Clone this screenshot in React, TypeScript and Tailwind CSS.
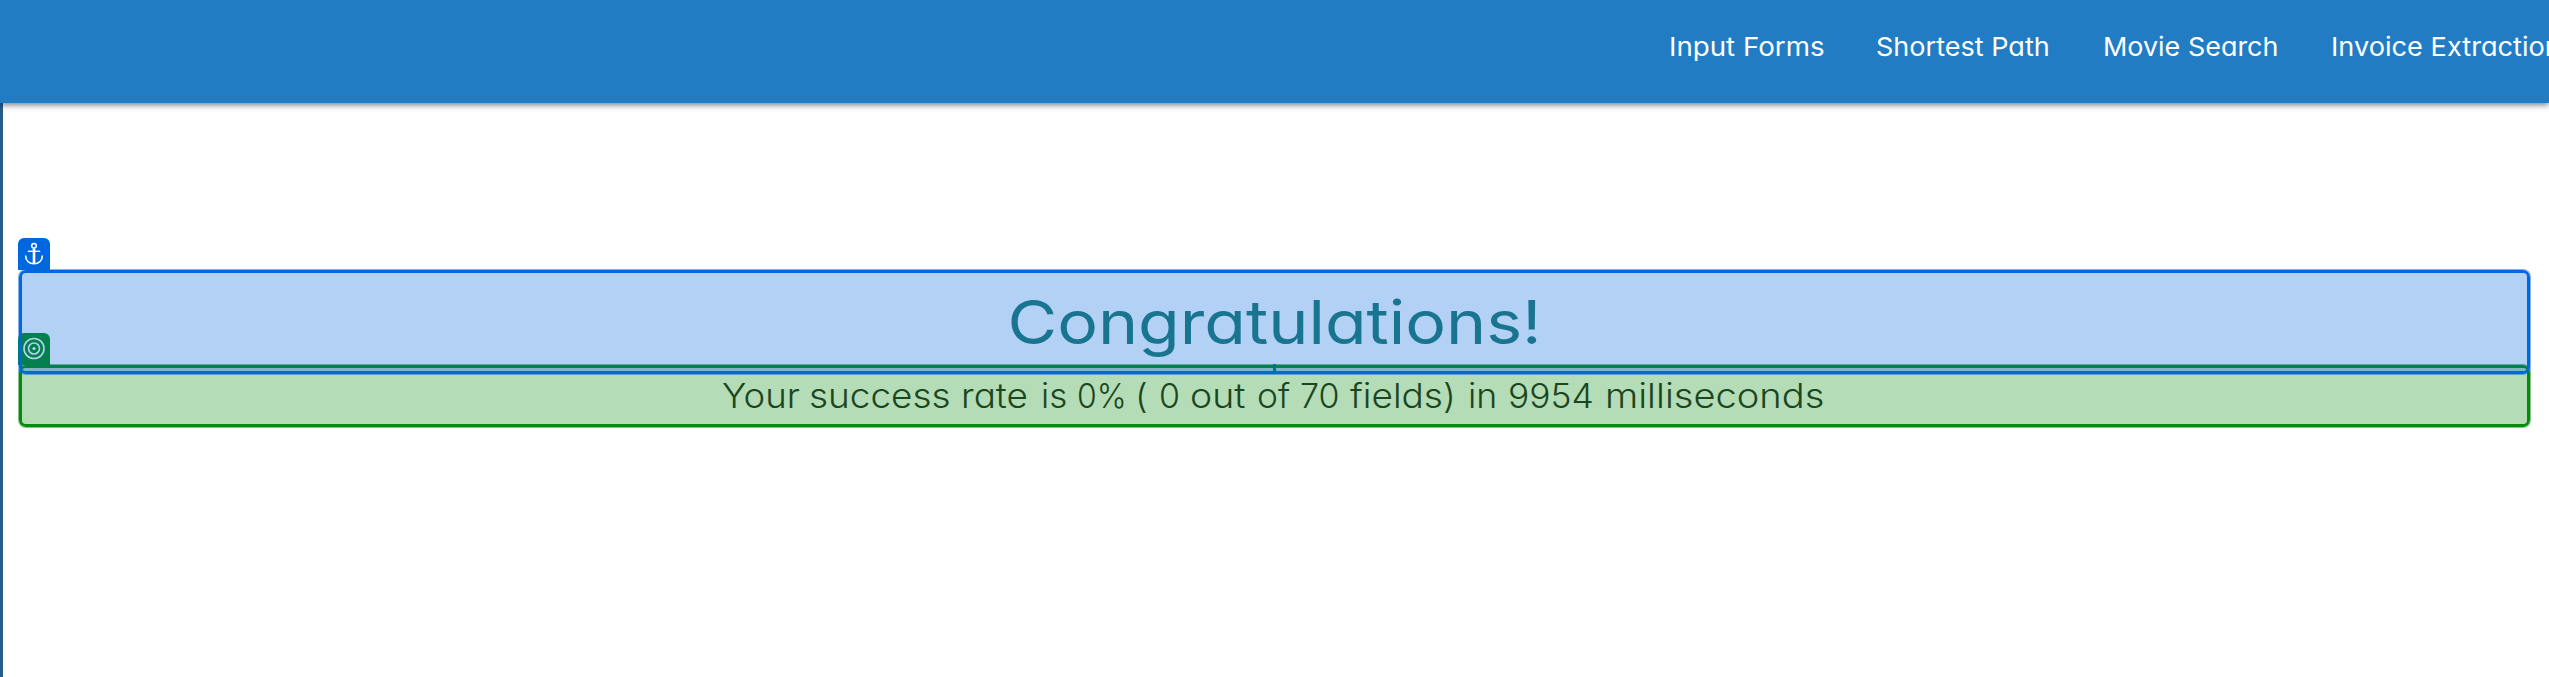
const links = [
  { label: "Input Forms", width: "w-[207px]", stretch: "scale-x-[1.065]" },
  { label: "Shortest Path", width: "w-[227px]", stretch: "scale-x-[1.04]" },
  { label: "Movie Search", width: "w-[228px]", stretch: "scale-x-[1.036]" },
  { label: "Invoice Extraction", width: "w-[218px]", stretch: "scale-x-[1.045]" },
];

const words = [
  { text: "Your", width: "w-[87px]", stretch: "scale-x-[1.075]" },
  { text: "success", width: "w-[151.5px]", stretch: "scale-x-[1.085]" },
  { text: "rate", width: "w-[80px]", stretch: "scale-x-[1.085]" },
  { text: "is", width: "w-[36px]", stretch: "scale-x-[1.03]" },
  { text: "0%", width: "w-[58px]", stretch: "scale-x-[0.94]" },
  { text: "(", width: "w-[24.5px]", stretch: "scale-x-[1.075]" },
  { text: "0", width: "w-[31px]", stretch: "scale-x-[1]" },
  { text: "out", width: "w-[67px]", stretch: "scale-x-[1.1]" },
  { text: "of", width: "w-[43px]", stretch: "scale-x-[1.04]" },
  { text: "70", width: "w-[50px]", stretch: "scale-x-[1]" },
  { text: "fields)", width: "w-[118px]", stretch: "scale-x-[1.09]" },
  { text: "in", width: "w-[40px]", stretch: "scale-x-[1.05]" },
  { text: "9954", width: "w-[97px]", stretch: "scale-x-[1.04]" },
  { text: "milliseconds", width: "w-[218px]", stretch: "scale-x-[1.12]" },
];

function AnchorIcon() {
  return (
    <svg viewBox="0 0 32 31" className="h-[31px] w-8" fill="none" stroke="white">
      <circle cx="16" cy="7.8" r="2.3" strokeWidth="1.5" />
      <path d="M16 10.5V26" strokeWidth="2.6" />
      <path d="M9.8 13.3H22.2" strokeWidth="1.4" />
      <path d="M7.6 17.5C7.6 22.5 11 25.8 16 25.8S24.4 22.5 24.4 17.5" strokeWidth="1.6" />
    </svg>
  );
}

function TargetIcon() {
  return (
    <svg viewBox="0 0 32 31" className="h-[31px] w-8" fill="none" stroke="white" strokeWidth="1.6">
      <circle cx="16" cy="15.5" r="10" />
      <circle cx="16" cy="15.5" r="5.5" />
      <circle cx="16" cy="15.5" r="1.6" fill="white" stroke="none" />
    </svg>
  );
}

export default function App() {
  return (
    <div className="flex h-[677px] w-full flex-col overflow-hidden bg-white font-['Inter',sans-serif] [font-feature-settings:'cv11','ss03']">
      <header className="relative z-20 flex h-[103px] shrink-0 justify-end bg-[#227cc3] shadow-[0_2px_6px_rgba(0,0,0,0.5)]">
        <nav className="flex pt-[31px] text-[26px] leading-8 text-white">
          {links.map((l) => (
            <a key={l.label} className={`shrink-0 whitespace-nowrap ${l.width}`}>
              <span className={`inline-block origin-left ${l.stretch}`}>{l.label}</span>
            </a>
          ))}
        </nav>
      </header>
      <main className="flex-1 border-l-[3px] border-[#265b8b] pt-[167px] pr-[19px] pl-4">
        <section className="relative z-10 flex h-[104px] items-center justify-center rounded-[7px] border-3 border-[#0068de] bg-[#0068de]/30 bg-clip-padding shadow-[0_0_0_1px_rgba(0,104,222,0.5)]">
          <div className="absolute -top-[35px] -left-[4px] h-[32px] w-8 rounded-t-[6px] bg-[#0068de]">
            <AnchorIcon />
          </div>
          <h1 className="scale-x-[1.115] whitespace-nowrap text-[61px] leading-none text-[#19758f]">Congratulations!</h1>
          <i className="absolute -bottom-[3px] left-[1251px] h-[10px] w-[3px] bg-[#0070a8]" />
        </section>
        <section className="relative -mt-[9px] flex h-[62px] items-center rounded-[7px] border-3 border-[#068c0d] bg-[#068c0d]/30 bg-clip-padding pl-[700px] shadow-[0_0_0_1px_rgba(6,140,13,0.5)]">
          <div className="absolute -top-[35px] -left-[4px] h-[32px] w-8 rounded-t-[6px] bg-[#068c0d]">
            <TargetIcon />
          </div>
          <p className="flex text-[34px] leading-none font-[350] whitespace-nowrap text-[#1a4620]">
            {words.map((w, i) => (
              <span key={i} className={`shrink-0 ${w.width}`}>
                <span className={`inline-block origin-left ${w.stretch}`}>{w.text}</span>
              </span>
            ))}
          </p>
        </section>
      </main>
    </div>
  );
}
